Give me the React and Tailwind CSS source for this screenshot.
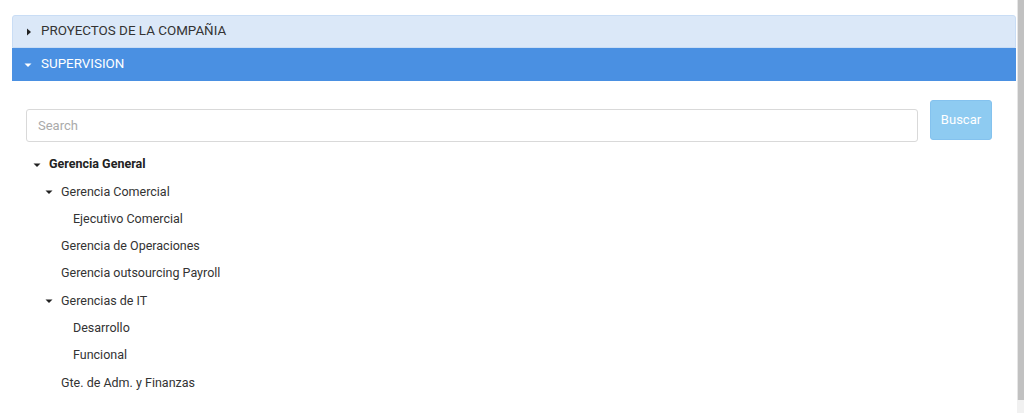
const tree = [
  { label: 'Gerencia General', level: 0, open: true, bold: true },
  { label: 'Gerencia Comercial', level: 1, open: true },
  { label: 'Ejecutivo Comercial', level: 2 },
  { label: 'Gerencia de Operaciones', level: 1 },
  { label: 'Gerencia outsourcing Payroll', level: 1 },
  { label: 'Gerencias de IT', level: 1, open: true },
  { label: 'Desarrollo', level: 2 },
  { label: 'Funcional', level: 2 },
  { label: 'Gte. de Adm. y Finanzas', level: 1 },
];

function Caret({ dir = 'down', className = '' }) {
  return (
    <svg width="8" height="8" viewBox="0 0 8 8" className={className}>
      {dir === 'down' ? <path d="M0.5 2.5 L7.5 2.5 L4 6 Z" fill="currentColor" /> : <path d="M2 0.5 L6 4 L2 7.5 Z" fill="currentColor" />}
    </svg>
  );
}

function TreeRow({ item }) {
  const pad = { 0: 'pl-[21px]', 1: 'pl-[33px]', 2: 'pl-[61px]' };
  return (
    <div className={`flex h-[27.3px] items-center ${pad[item.level]} text-[12.5px] text-[#333]`}>
      {item.open && <Caret className="mr-[8px] text-[#222]" />}
      {!item.open && item.level === 1 && <span className="w-[16px]" />}
      <span className={item.bold ? 'font-bold text-[#222]' : ''}>{item.label}</span>
    </div>
  );
}

export default function App() {
  return (
    <div className="flex h-[413px] w-[1024px] overflow-hidden bg-white" style={{ fontFamily: 'Roboto, "Liberation Sans", sans-serif' }}>
      <div className="flex-1 pl-[12px] pr-[1px] pt-[15px]">
        <div className="flex h-[33px] items-center rounded-t-[3px] border border-[#c9ddf5] bg-[#dbe8f8] pl-[12px] text-[13.4px] text-[#333]">
          <Caret dir="right" className="mr-[8px] text-[#222]" />
          PROYECTOS DE LA COMPAÑIA
        </div>
        <div className="flex h-[33px] items-center bg-[#4a90e2] pl-[12px] text-[13.4px] text-white">
          <Caret className="mr-[9px]" />
          SUPERVISION
        </div>
        <div className="flex items-start gap-[12px] pl-[14px] pr-[24px] pt-[19px]">
          <input
            placeholder="Search"
            className="mt-[9px] h-[33px] flex-1 rounded-[3px] border border-[#d9d9d9] px-[11px] text-[13px] text-[#333] placeholder-[#aaa] outline-none"
          />
          <button className="h-[40px] w-[62px] rounded-[3px] border border-[#84c2ee] bg-[#8ecbf1] text-[13px] text-white">Buscar</button>
        </div>
        <div className="pt-[9px]">
          {tree.map((item) => (
            <TreeRow key={item.label} item={item} />
          ))}
        </div>
      </div>
      <div className="flex w-[7px] flex-col">
        <div className="h-[400px] border-l border-[#e6e6e6] bg-[#c1c1c1]" />
        <div className="flex-1 bg-[#f1f1f1]" />
      </div>
    </div>
  );
}
